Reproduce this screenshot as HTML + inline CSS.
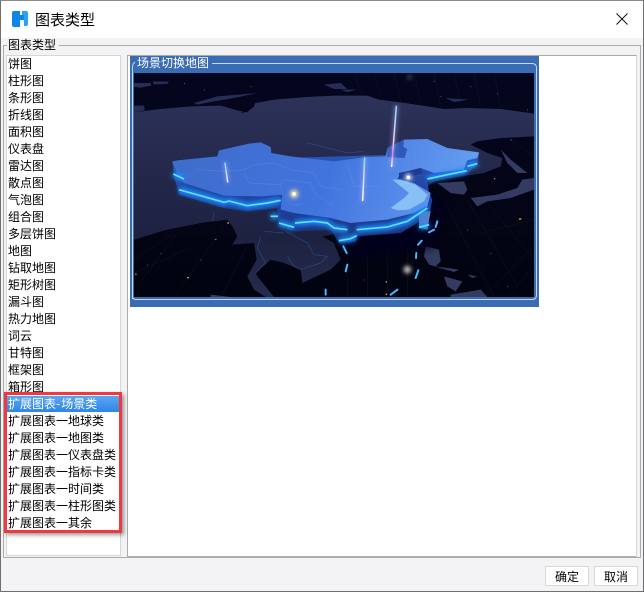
<!DOCTYPE html>
<html><head><meta charset="utf-8"><style>
html,body{margin:0;padding:0}
body{width:644px;height:592px;overflow:hidden;background:#f3f3f5;position:relative;font:12px/17px "WenQuanYi Zen Hei","Noto Sans CJK SC",sans-serif;color:#000}
div{position:absolute;box-sizing:border-box}
.t{left:8px;white-space:nowrap;height:17px}
</style></head><body>
<div style="left:0;top:0;width:644px;height:592px;border:1px solid #6f6f6f;border-top-color:#8a8a8a"></div>
<div style="left:1px;top:1px;width:642px;height:37px;background:#fff"></div>
<svg style="position:absolute;left:0;top:0" width="40" height="38"><path d="M12 13 Q12 11 14 11 H20 V27 H14 Q12 27 12 25Z" fill="#0f85e8"/><path d="M20 15 H24 V20 H20Z" fill="#0f85e8"/><path d="M22 11 H26 Q28 11 28 13 V24 Q28 26 26 26 H24 V15 H22Z" fill="#2ba2f2"/></svg>
<div style="left:35px;top:11px;font-size:15px;line-height:18px;white-space:nowrap">图表类型</div>
<svg style="position:absolute;left:615px;top:12px" width="14" height="14"><path d="M1.500 1.500 12.500 12.500M12.500 1.500 1.500 12.500" stroke="#111" stroke-width="1"/></svg>

<div style="left:3px;top:45px;width:638px;height:513px;border:1px solid #a9ada3"></div>
<div style="left:7px;top:38px;width:52px;height:14px;background:#f3f3f5;padding-left:1px;line-height:14px">图表类型</div>
<div style="left:6px;top:55px;width:115px;height:501px;background:#fff;border:1px solid #d6d6d6"></div>
<div style="left:127px;top:55px;width:510px;height:502px;background:#fff;border:1px solid #a9a9a9;border-right-color:#d8d8d8;border-bottom-color:#b0b0a8"></div>

<div class="t" style="top:55px">饼图</div>
<div class="t" style="top:72px">柱形图</div>
<div class="t" style="top:89px">条形图</div>
<div class="t" style="top:106px">折线图</div>
<div class="t" style="top:123px">面积图</div>
<div class="t" style="top:140px">仪表盘</div>
<div class="t" style="top:157px">雷达图</div>
<div class="t" style="top:174px">散点图</div>
<div class="t" style="top:191px">气泡图</div>
<div class="t" style="top:208px">组合图</div>
<div class="t" style="top:225px">多层饼图</div>
<div class="t" style="top:242px">地图</div>
<div class="t" style="top:259px">钻取地图</div>
<div class="t" style="top:276px">矩形树图</div>
<div class="t" style="top:293px">漏斗图</div>
<div class="t" style="top:310px">热力地图</div>
<div class="t" style="top:327px">词云</div>
<div class="t" style="top:344px">甘特图</div>
<div class="t" style="top:361px">框架图</div>
<div class="t" style="top:378px">箱形图</div>
<div style="left:7px;top:396px;width:113px;height:16px;background:linear-gradient(#5aa6f2,#2f86e6)"></div>
<div class="t" style="top:395px;color:#fff">扩展图表<span style="letter-spacing:1px">-</span>场景类</div>
<div class="t" style="top:412px">扩展图表一地球类</div>
<div class="t" style="top:429px">扩展图表一地图类</div>
<div class="t" style="top:446px">扩展图表一仪表盘类</div>
<div class="t" style="top:463px">扩展图表一指标卡类</div>
<div class="t" style="top:480px">扩展图表一时间类</div>
<div class="t" style="top:497px">扩展图表一柱形图类</div>
<div class="t" style="top:514px">扩展图表一其余</div>
<div style="left:4px;top:392px;width:118px;height:141px;border:3px solid #f0393f;box-shadow:2px 2px 4px rgba(0,0,0,.4)"></div>

<div style="left:130px;top:56px;width:409px;height:251px;background:#3a6cb4"></div>
<svg style="position:absolute;left:134px;top:73px" width="400" height="224" viewBox="0 0 1200 672">
<defs>
<filter id="g" x="-30%" y="-60%" width="160%" height="220%"><feGaussianBlur stdDeviation="7"/></filter>
<filter id="b" x="-30%" y="-30%" width="160%" height="160%"><feGaussianBlur stdDeviation="14"/></filter>
<filter id="h" x="-150%" y="-150%" width="400%" height="400%"><feGaussianBlur stdDeviation="6"/></filter>
<linearGradient id="top" x1="0" y1="0" x2="1" y2="0.1"><stop offset="0" stop-color="#3e6cca"/><stop offset=".55" stop-color="#4274de"/><stop offset="1" stop-color="#659df0"/></linearGradient>
<linearGradient id="side" x1="0" y1="0" x2="0" y2="1"><stop offset="0" stop-color="#2a55b8"/><stop offset=".7" stop-color="#1c3c94"/><stop offset="1" stop-color="#1a3270"/></linearGradient>
<linearGradient id="land" x1="0" y1="0" x2="0" y2="1"><stop offset="0" stop-color="#2d3259"/><stop offset=".35" stop-color="#24294c"/><stop offset=".7" stop-color="#1d2241"/><stop offset="1" stop-color="#262b4c"/></linearGradient>
<linearGradient id="bg" x1="0" y1="0" x2="0" y2="1"><stop offset="0" stop-color="#05061f"/><stop offset="1" stop-color="#02030f"/></linearGradient>
<linearGradient id="bm1" x1="0" y1="0" x2="0" y2="1"><stop offset="0" stop-color="#7fe4ff"/><stop offset=".55" stop-color="#e9d4ff"/><stop offset=".8" stop-color="#e080f0"/><stop offset="1" stop-color="#fff"/></linearGradient>
<linearGradient id="bm2" x1="0" y1="0" x2="0" y2="1"><stop offset="0" stop-color="#7fe4ff"/><stop offset=".6" stop-color="#d8e4ff"/><stop offset="1" stop-color="#fff"/></linearGradient>
</defs>
<rect width="1200" height="672" fill="url(#bg)"/>
<g stroke="#2c4a58" stroke-width="1" fill="none" opacity=".4"><path d="M10 640 150 450M120 672 270 460M260 672 340 520M0 600 180 520M0 560 120 480M640 672 640 480M700 672 700 480M760 672 760 470M820 672 820 440M940 400 1080 672M1000 380 1150 640M1060 390 1200 560M1120 672 1200 580M1050 672 1200 520M660 0 680 60M720 0 740 70M780 0 800 85M840 0 860 95M900 0 920 100M960 0 980 100M1020 0 1040 100M1080 0 1100 105M1130 200 1200 250M1040 480 1200 440"/></g>
<g fill="#cdb84a"><rect x="3" y="602" width="5" height="3"/><rect x="160" y="612" width="5" height="4"/><rect x="244" y="498" width="3" height="3"/><rect x="280" y="448" width="5" height="4"/><rect x="80" y="540" width="2" height="2"/><rect x="40" y="575" width="2" height="2"/><rect x="200" y="560" width="2" height="2"/><rect x="1155" y="436" width="7" height="4"/><rect x="1080" y="316" width="4" height="3"/><rect x="1000" y="470" width="2" height="2"/><rect x="1070" y="540" width="2" height="2"/><rect x="1120" y="640" width="2" height="2"/><rect x="760" y="490" width="3" height="3"/><rect x="755" y="625" width="4" height="4"/><rect x="755" y="662" width="4" height="4"/><rect x="690" y="620" width="2" height="2"/><rect x="920" y="70" width="2" height="2"/><rect x="1010" y="40" width="2" height="2"/><rect x="1090" y="60" width="2" height="2"/><rect x="1180" y="110" width="2" height="2"/><rect x="1130" y="200" width="3" height="2"/><rect x="350" y="40" width="2" height="2"/><rect x="210" y="50" width="2" height="2"/><rect x="150" y="30" width="2" height="2"/><rect x="900" y="25" width="2" height="2"/></g>

<path d="M0 118 L80 108 L170 100 L260 98 L310 112 L340 118 L365 90 L420 80 L520 72 L600 68 L700 68 L735 80 L800 88 L880 100 L930 108 L1000 105 L1100 108 L1200 122 L1200 190 L1100 195 L1030 205 L1010 215 L1060 240 L1105 255 L1100 280 L1050 300 L980 310 L900 325 L880 340 L890 430 L620 480 L565 490 L600 510 L620 560 L590 590 L505 630 L500 590 L450 570 L410 560 L365 600 L370 610 L420 672 L395 672 L360 650 L340 610 L368 560 L360 510 L295 515 L310 490 L295 460 L280 440 L200 450 L100 470 L0 500Z" fill="url(#land)"/>
<g fill="#272d55"><path d="M0 30H50L52 38 20 44 0 42ZM55 25 105 26 100 33 60 34ZM180 90 250 70 370 60 300 75 240 85 190 95ZM0 98 30 98 32 112 0 118ZM570 35 620 30 640 48 600 48ZM620 50 670 50 640 57ZM935 75 1005 80 960 87Z"/></g>
<path d="M320 120 L365 85 L360 100 L342 116Z" fill="#04051c"/>
<g fill="#333b60"><path d="M910 330 990 325 1000 350 990 365 950 360ZM1010 375 1090 365 1150 345 1165 320 1200 315 1200 350 1130 375 1060 385 1030 400ZM1100 230 1130 260 1180 300 1150 300 1120 270ZM875 520 915 530 920 565 905 580 975 590 960 597 885 575 870 550ZM930 610 985 625 965 655 940 640ZM1000 605 1030 610 1015 615ZM950 665 1040 650 1060 672 950 672ZM230 665 290 672 230 672Z"/></g>
<g fill="none" stroke="#2a5490" stroke-width="2" opacity=".8"><path d="M240 420 235 445M380 490 370 525 395 570 365 600M455 475 520 510 540 545 580 550 560 570 500 590M460 550 480 580 500 590M390 475 450 480M520 210 640 240 690 235"/></g>

<path d="M620 480 L890 420 L900 360 L940 400 L900 520 L640 560Z" fill="#03051a" filter="url(#b)"/>
<path d="M115 265 L120 310 L135 365 L270 405 L340 415 L430 405 L435 460 L485 475 L590 470 L615 510 L665 505 L670 490 L800 480 L885 430 L895 380 L885 360 L880 320 L1000 300 L1030 275 L1035 238 Z" fill="url(#side)"/>
<path d="M115 265 L130 262 L250 250 L255 232 L345 212 L380 208 L410 222 L412 240 L470 250 L600 265 L700 252 L755 250 L760 225 L810 200 L880 198 L940 225 L1035 238 L1030 255 L1000 262 L990 290 L900 300 L860 285 L800 300 L790 318 L840 330 L890 360 L880 400 L840 420 L760 440 L650 450 L590 435 L480 420 L440 410 L445 365 L380 370 L270 368 L150 330 L130 305Z" fill="url(#top)"/>
<path d="M795 300 860 285 865 300 820 315 795 315Z" fill="#1c3a90"/>
<path d="M760 225 810 200 808 222 820 228 812 255 760 252Z" fill="#2f58b8"/>
<path d="M775 320 800 320 845 335 880 365 870 385 825 410 790 412 770 405 810 375 825 360Z" fill="#88bff5"/>
<path d="M855 415 890 415 880 470 855 465Z" fill="#5a7fc4"/>
<g fill="none" stroke="#74a9f0" stroke-width="1.500" opacity=".4"><path d="M190 290 270 295 330 290 360 275 420 270 470 290 540 300 560 340 620 350M330 300 345 330 440 335 450 320 530 330 545 365 600 400M450 365 470 395 500 395M640 270 660 340 740 340M440 335 445 365"/></g>

<g fill="none" stroke="#1f8cff" stroke-width="18" filter="url(#g)" stroke-linejoin="round"><path d="M118 303 150 318M135 350 200 368 270 388 285 384 340 398 400 390 440 382M410 430H432M435 450 480 463M483 450 540 445 580 450 600 465 640 470M668 470 760 462 820 445 850 425 880 405M615 503 650 497 668 488M880 318 940 305 998 293M1000 280 1030 272M855 463 885 455"/></g>
<g fill="none" stroke="#5fe0ff" stroke-width="5" stroke-linejoin="round"><path d="M118 303 150 318M135 350 200 368 270 388 285 384 340 398 400 390 440 382M410 430H432M435 450 480 463M483 450 540 445 580 450 600 465 640 470M668 470 760 462 820 445 850 425 880 405M615 503 650 497 668 488M880 318 940 305 998 293M1000 280 1030 272M855 463 885 455"/></g>
<g fill="none" stroke="#45b8ff" stroke-width="6" stroke-linecap="round"><path d="M628 520 638 540M640 575 635 595M575 650V665M770 665 790 650M852 515 863 503M847 540 846 555M853 592 845 615M910 445 905 462M885 478 900 470"/></g>

<g stroke-linecap="round"><path d="M273 270 281 327M692 255 686 382M787 100 773 280" stroke="#c8b4ff" stroke-width="9" opacity=".55" filter="url(#g)"/><path d="M273 270 281 327" stroke="url(#bm2)" stroke-width="4"/><path d="M692 255 686 382" stroke="url(#bm2)" stroke-width="4.500"/><path d="M787 100 773 280" stroke="url(#bm1)" stroke-width="4.500"/></g>
<circle cx="480" cy="363" r="12" fill="#ffe9a0" filter="url(#h)"/><circle cx="480" cy="363" r="6" fill="#fff8d8"/>
<circle cx="823" cy="313" r="10" fill="#fff" filter="url(#h)"/><circle cx="823" cy="313" r="5" fill="#fff"/>
<circle cx="820" cy="590" r="11" fill="#cfcfcf" filter="url(#h)"/><circle cx="827" cy="12" r="4" fill="#bbb" filter="url(#h)"/>
</svg>
<svg style="position:absolute;left:129px;top:55px" width="411" height="253" viewBox="129 55 411 253"><path d="M132.500 299 V67 Q132.500 64 135 62 M212 63.500 H532 Q536.500 63.500 536.500 68 V295 Q536.500 299.500 532 299.500 H136 Q132.500 299.500 132.500 296" fill="none" stroke="#c8d8f0" stroke-width="1"/></svg>
<div style="left:137px;top:55px;color:#fff;line-height:15px;white-space:nowrap">场景切换地图</div>

<div style="left:545px;top:566px;width:44px;height:20px;background:#fff;border:1px solid #d8d8d8;text-align:center;line-height:19px">确定</div>
<div style="left:594px;top:566px;width:44px;height:20px;background:#fff;border:1px solid #d8d8d8;text-align:center;line-height:19px">取消</div>
</body></html>
